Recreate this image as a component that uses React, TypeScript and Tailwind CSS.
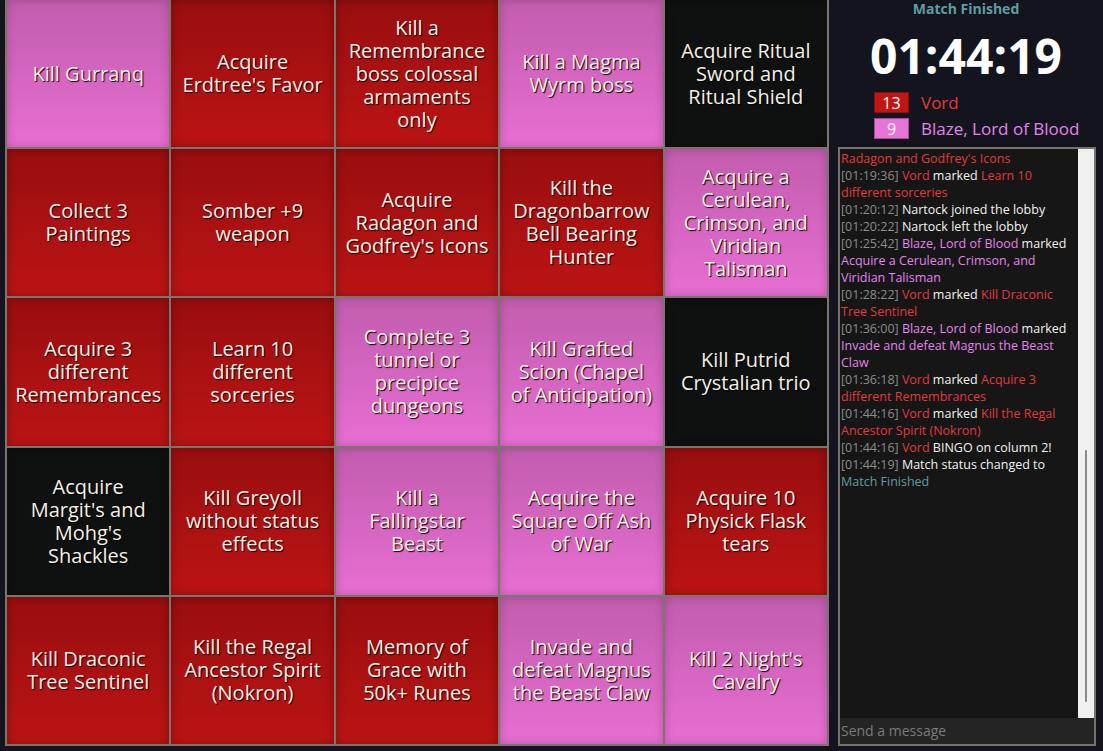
import React from "react";

type C = "r" | "p" | "b";

const cells: { c: C; t: string[] }[] = [
  { c: "p", t: ["Kill Gurranq"] },
  { c: "r", t: ["Acquire", "Erdtree's Favor"] },
  { c: "r", t: ["Kill a", "Remembrance", "boss colossal", "armaments", "only"] },
  { c: "p", t: ["Kill a Magma", "Wyrm boss"] },
  { c: "b", t: ["Acquire Ritual", "Sword and", "Ritual Shield"] },
  { c: "r", t: ["Collect 3", "Paintings"] },
  { c: "r", t: ["Somber +9", "weapon"] },
  { c: "r", t: ["Acquire", "Radagon and", "Godfrey's Icons"] },
  { c: "r", t: ["Kill the", "Dragonbarrow", "Bell Bearing", "Hunter"] },
  { c: "p", t: ["Acquire a", "Cerulean,", "Crimson, and", "Viridian", "Talisman"] },
  { c: "r", t: ["Acquire 3", "different", "Remembrances"] },
  { c: "r", t: ["Learn 10", "different", "sorceries"] },
  { c: "p", t: ["Complete 3", "tunnel or", "precipice", "dungeons"] },
  { c: "p", t: ["Kill Grafted", "Scion (Chapel", "of Anticipation)"] },
  { c: "b", t: ["Kill Putrid", "Crystalian trio"] },
  { c: "b", t: ["Acquire", "Margit's and", "Mohg's", "Shackles"] },
  { c: "r", t: ["Kill Greyoll", "without status", "effects"] },
  { c: "p", t: ["Kill a", "Fallingstar", "Beast"] },
  { c: "p", t: ["Acquire the", "Square Off Ash", "of War"] },
  { c: "r", t: ["Acquire 10", "Physick Flask", "tears"] },
  { c: "r", t: ["Kill Draconic", "Tree Sentinel"] },
  { c: "r", t: ["Kill the Regal", "Ancestor Spirit", "(Nokron)"] },
  { c: "r", t: ["Memory of", "Grace with", "50k+ Runes"] },
  { c: "p", t: ["Invade and", "defeat Magnus", "the Beast Claw"] },
  { c: "p", t: ["Kill 2 Night's", "Cavalry"] },
];

const cellBg: Record<C, string> = {
  r: "bg-[linear-gradient(to_bottom,#990e0f,#bc1414)] shadow-[inset_0_0_10px_rgba(0,0,0,0.3)]",
  p: "bg-[linear-gradient(to_bottom,#c25cae,#e76ed2)] shadow-[inset_0_0_10px_rgba(0,0,0,0.2)]",
  b: "bg-[#0f1111] shadow-[inset_0_0_10px_rgba(0,0,0,0.3)]",
};

const TS = ({ children }: { children: React.ReactNode }) => (
  <span className="text-[#8c8c8c]">{children}</span>
);
const Red = ({ children }: { children: React.ReactNode }) => (
  <span className="text-[#e23a3a]">{children}</span>
);
const Pink = ({ children }: { children: React.ReactNode }) => (
  <span className="text-[#e384ec]">{children}</span>
);

const chat: React.ReactNode[] = [
  <Red>Radagon and Godfrey's Icons</Red>,
  <>
    <TS>[01:19:36]</TS> <Red>Vord</Red> marked <Red>Learn 10</Red>
  </>,
  <Red>different sorceries</Red>,
  <>
    <TS>[01:20:12]</TS> Nartock joined the lobby
  </>,
  <>
    <TS>[01:20:22]</TS> Nartock left the lobby
  </>,
  <>
    <TS>[01:25:42]</TS> <Pink>Blaze, Lord of Blood</Pink> marked
  </>,
  <Pink>Acquire a Cerulean, Crimson, and</Pink>,
  <Pink>Viridian Talisman</Pink>,
  <>
    <TS>[01:28:22]</TS> <Red>Vord</Red> marked <Red>Kill Draconic</Red>
  </>,
  <Red>Tree Sentinel</Red>,
  <>
    <TS>[01:36:00]</TS> <Pink>Blaze, Lord of Blood</Pink> marked
  </>,
  <Pink>Invade and defeat Magnus the Beast</Pink>,
  <Pink>Claw</Pink>,
  <>
    <TS>[01:36:18]</TS> <Red>Vord</Red> marked <Red>Acquire 3</Red>
  </>,
  <Red>different Remembrances</Red>,
  <>
    <TS>[01:44:16]</TS> <Red>Vord</Red> marked <Red>Kill the Regal</Red>
  </>,
  <Red>Ancestor Spirit (Nokron)</Red>,
  <>
    <TS>[01:44:16]</TS> <Red>Vord</Red> BINGO on column 2!
  </>,
  <>
    <TS>[01:44:19]</TS> Match status changed to
  </>,
  <span className="text-[#5f9ea0]">Match Finished</span>,
];

export default function App() {
  return (
    <div
      className="flex h-[751px] w-[1103px] overflow-hidden bg-[#14141e]"
      style={{ fontFamily: '"Open Sans", "Noto Sans", sans-serif' }}
    >
      <div className="ml-[5px] -mt-[2px] grid h-[748px] w-[824px] shrink-0 grid-cols-5 grid-rows-5 gap-[2px] bg-[#7b766b] p-[2px]">
        {cells.map((cell, i) => (
          <div
            key={i}
            className={`flex flex-col items-center justify-center pb-[1px] text-center text-[20px] leading-[23px] text-[#f4f0e6] [text-shadow:1px_1px_1px_#000] ${cellBg[cell.c]}`}
          >
            {cell.t.map((l, j) => (
              <div key={j} className="whitespace-nowrap">
                {l}
              </div>
            ))}
          </div>
        ))}
      </div>

      <div className="flex min-w-0 flex-1 flex-col">
        <div className="h-[17px] text-center text-[14px] font-bold leading-[17px] text-[#5f9ea0]">
          Match Finished
        </div>
        <div className="mt-[9px] h-[60px] text-center text-[48px] font-bold leading-[60px] text-white">
          01:44:19
        </div>
        <div className="mt-[6px] flex flex-col gap-[5px] pl-[45px]">
          <div className="flex h-[21px] items-center gap-[12px]">
            <div className="flex h-[21px] w-[35px] items-center justify-center border border-[#8e0c0c] bg-[#c01515] text-[16px] leading-none text-white">
              13
            </div>
            <div className="text-[17px] leading-none text-[#e23a3a]">Vord</div>
          </div>
          <div className="flex h-[21px] items-center gap-[12px]">
            <div className="flex h-[21px] w-[35px] items-center justify-center border border-[#a34a9a] bg-[#e874d8] text-[16px] leading-none text-white">
              9
            </div>
            <div className="text-[17px] leading-none text-[#e384ec]">Blaze, Lord of Blood</div>
          </div>
        </div>

        <div className="mb-[5px] ml-[9px] mr-[7px] mt-[8px] flex min-h-0 flex-1 flex-col border-2 border-[#77726a] bg-[#161616]">
          <div className="flex min-h-0 flex-1">
            <div className="min-w-0 flex-1 overflow-hidden pl-[1px] pt-[1px] text-[12.5px] leading-[17px] text-[#f2f2f2]">
              {chat.map((l, i) => (
                <div key={i} className="whitespace-nowrap">
                  {l}
                </div>
              ))}
            </div>
            <div className="relative w-[16px] bg-[#f0f0f0]">
              <div className="absolute left-[7px] top-[301px] h-[252px] w-[2px] rounded-full bg-[#8a8a8a]" />
            </div>
          </div>
          <input
            className="h-[26px] w-full bg-[#242424] px-[1px] pb-[2px] text-[14px] text-[#dddddd] outline-none placeholder:text-[#7a7a7a]"
            placeholder="Send a message"
          />
        </div>
      </div>
    </div>
  );
}
